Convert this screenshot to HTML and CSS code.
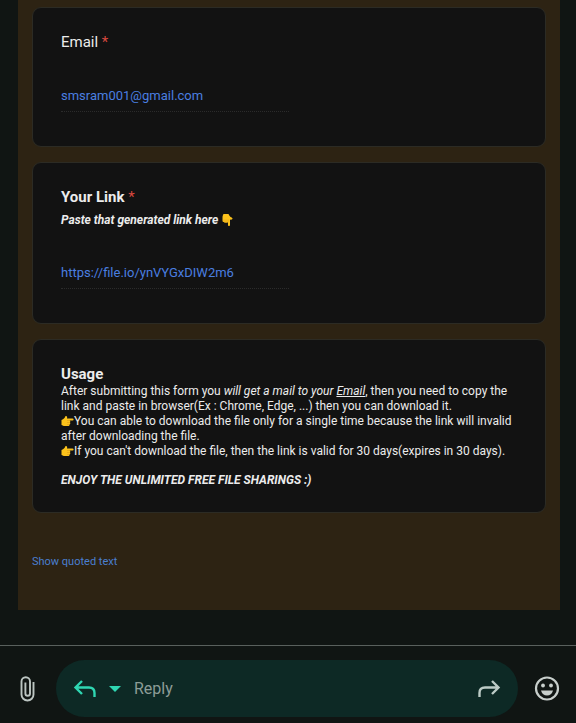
FILE: index.html
```html
<!DOCTYPE html>
<html lang="en">
<head>
<meta charset="utf-8">
<meta name="viewport" content="width=device-width, initial-scale=1">
<title>Form response</title>
<link rel="stylesheet" href="styles.css">
</head>
<body>
<svg class="defs" aria-hidden="true">
  <symbol id="hand" viewBox="0 0 26 24">
    <path fill="#fcc21b" d="M1 10c2-1 4-2 6-4 1-1 1-4 3-4 2 0 3 2 2 5l11 0c3 0 3 4 0 4h-6c2 1 2 3 1 4 1 1 1 3-1 4 0 2-1 3-3 3H8c-3 0-5-1-7-2z"/>
    <path fill="none" stroke="#d99518" stroke-width="1" d="M17 11h-5M18 15h-6M17 19h-5"/>
  </symbol>
</svg>
<main class="message">
  <section class="card">
    <h2 class="title title-plain">Email <span class="required">*</span></h2>
    <a class="answer" href="mailto:smsram001@gmail.com">smsram001@gmail.com</a>
  </section>
  <section class="card">
    <h2 class="title">Your Link <span class="required">*</span></h2>
    <p class="hint">Paste that generated link here <svg class="hand hand-down" role="img" aria-label="pointing down"><use href="#hand"/></svg></p>
    <a class="answer" href="https://file.io/ynVYGxDIW2m6">https://file.io/ynVYGxDIW2m6</a>
  </section>
  <section class="card card-usage">
    <h2 class="title">Usage</h2>
    <p class="copy">After submitting this form you <em>will get a mail to your <u>Email</u></em>, then you need to copy the<br>link and paste in browser(Ex : Chrome, Edge, ...) then you can download it.</p>
    <p class="copy"><svg class="hand" role="img" aria-label="pointing right"><use href="#hand"/></svg>You can able to download the file only for a single time because the link will invalid<br>after downloading the file.</p>
    <p class="copy"><svg class="hand" role="img" aria-label="pointing right"><use href="#hand"/></svg>If you can't download the file, then the link is valid for 30 days(expires in 30 days).</p>
    <p class="copy closing">ENJOY THE UNLIMITED FREE FILE SHARINGS :)</p>
  </section>
  <a class="quoted" href="#quoted">Show quoted text</a>
</main>
<footer class="composer">
  <button class="icon" type="button" aria-label="Attach file">
    <svg width="24" height="28" viewBox="0 0 24 28"><path d="M17.500 7v12.500a6 6 0 0 1-12 0V6.500a4 4 0 0 1 8.500 0v12a2.300 2.300 0 0 1-4.600 0V7.500" fill="none" stroke="#bcc5c2" stroke-width="1.900"/></svg>
  </button>
  <div class="pill">
    <button class="icon" type="button" aria-label="Reply">
      <svg width="24" height="20" viewBox="0 0 24 20"><path d="M9 2L2.500 8.500 9 15M3 8.500h13q5.500 0 5.500 5.500v4" fill="none" stroke="#2fd6b2" stroke-width="2.400"/></svg>
    </button>
    <button class="icon caret" type="button" aria-label="Reply options">
      <svg width="12" height="6" viewBox="0 0 12 6"><path d="M0 0h12L6 6z" fill="#2fd6b2"/></svg>
    </button>
    <input class="reply" type="text" placeholder="Reply" aria-label="Reply">
    <button class="icon" type="button" aria-label="Forward">
      <svg width="24" height="20" viewBox="0 0 24 20"><path d="M15 2l6.500 6.500L15 15M21 8.500H8q-5.500 0-5.500 5.500v4" fill="none" stroke="#bccbc6" stroke-width="2.400"/></svg>
    </button>
  </div>
  <button class="icon" type="button" aria-label="Add emoji">
    <svg width="26" height="26" viewBox="0 0 26 26"><circle cx="13" cy="12.500" r="11" fill="none" stroke="#c8cfcc" stroke-width="2.200"/><circle cx="9" cy="9.500" r="1.900" fill="#c8cfcc"/><circle cx="17" cy="9.500" r="1.900" fill="#c8cfcc"/><path d="M7 14.500h12q-1.500 5-6 5t-6-5z" fill="#c8cfcc"/></svg>
  </button>
</footer>
</body>
</html>
```
FILE: styles.css
```css
* { box-sizing: border-box; }
body {
  margin: 0;
  background: #101513;
  color: #ececec;
  font-family: Roboto, "Liberation Sans", sans-serif;
}
.defs { display: none; }
.message {
  display: flex;
  flex-direction: column;
  gap: 15px;
  margin: 0 16px 35px 18px;
  padding: 7px 14px 40px;
  background: #2d2313;
}
.card {
  padding: 24px 28px 34px;
  border: 1px solid #2c2b24;
  border-radius: 9px;
  background: #121212;
}
.card-usage { padding-bottom: 24px; }
.title {
  margin: 0;
  font-size: 15px;
  line-height: 20px;
  font-weight: 700;
}
.title-plain { font-weight: 400; }
.required { color: #d8483f; font-weight: 400; }
.hint {
  margin: 4px 0 0;
  font-size: 12px;
  line-height: 18px;
  font-style: italic;
  font-weight: 700;
}
.answer {
  display: block;
  width: 50%;
  margin-top: 35px;
  padding-bottom: 6px;
  border-bottom: 1px dotted #2b2b2b;
  color: #4a7fe0;
  font-size: 13px;
  line-height: 18px;
  text-decoration: none;
}
.copy {
  margin: 0;
  font-size: 12px;
  line-height: 15px;
}
.closing {
  margin-top: 14px;
  font-style: italic;
  font-weight: 700;
}
.hand {
  width: 13px;
  height: 12px;
  vertical-align: -2px;
}
.hand-down { transform: rotate(90deg); }
.quoted {
  margin-top: 26px;
  color: #4a7fd0;
  font-size: 11px;
  line-height: 16px;
  text-decoration: none;
}
.composer {
  display: flex;
  align-items: center;
  gap: 16px;
  padding: 14px 16px 6px;
  border-top: 1px solid #59605d;
}
.pill {
  display: flex;
  flex: 1;
  align-items: center;
  min-width: 0;
  height: 57px;
  padding: 0 17px;
  border-radius: 29px;
  background: #0d2925;
}
.icon {
  display: flex;
  flex: none;
  padding: 0;
  border: 0;
  background: none;
}
.caret { margin: 0 13px 0 12px; }
.reply {
  flex: 1;
  min-width: 0;
  padding: 0;
  border: 0;
  outline: 0;
  background: none;
  color: #dce5e2;
  font: 16px/24px Roboto, sans-serif;
}
.reply::placeholder { color: #8c9c97; opacity: 1; }
```
